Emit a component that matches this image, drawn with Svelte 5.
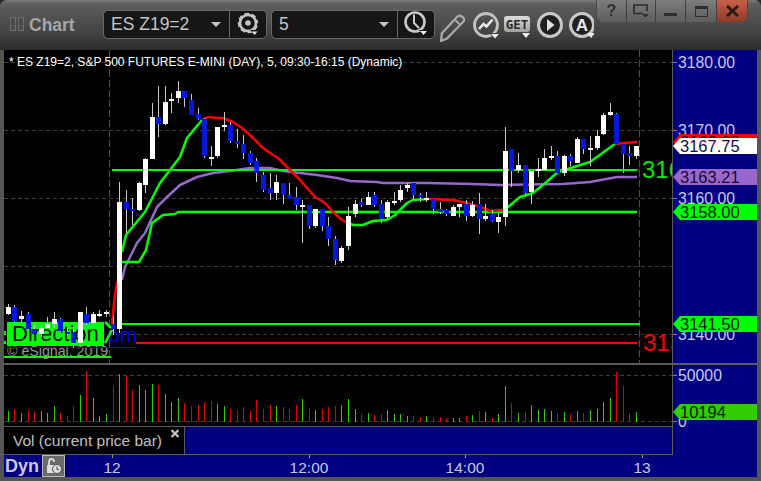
<script>
  const seg = (ox, oy, pts) => pts.map((r) => ({ t: oy + r[0] / 3, b: oy + r[1] / 3, bt: oy + r[2] / 3, bb: oy + r[3] / 3, c: r[4] }));
  const W = 'w', B = 'b';
  const raw = [
    ...seg(0, 80, [[672,705,682,702,W],[675,725,682,723,B],[693,730,708,718,W],[697,750,702,747,B],[735,762,748,761,B],[735,770,745,762,W],[712,745,732,744,W],[695,745,717,732,W],[713,755,718,752,B],[745,765,755,758,B],[748,805,755,790,B],[695,790,697,788,W],[682,735,702,728,B],[695,732,702,728,W],[690,712,703,707,W],[690,712,696,703,W],[708,765,732,746,B],[306,760,366,746,W],[330,460,366,387,B],[355,435,387,392,B],[305,392,310,390,W],[235,340,238,315,W],[68,237,111,237,W],[18,170,111,132,B],[18,135,66,132,W],[40,100,57,63,W],[3,68,33,54,W],[33,80,33,54,B],[42,105,60,105,B],[85,120,103,118,B],[115,235,118,228,B],[198,258,231,236,W],[140,235,142,228,W],[97,152,135,140,W],[125,190,136,183,B],[148,205,183,192,B],[165,237,192,219,B]]),
    ...seg(0, 80, [[213,255,220,250,B],[235,305,243,278,B],[275,335,285,329,B],[279,360,324,340,B],[285,360,306,338,W],[310,372,310,345,B],[308,358,345,357,B],[322,390,351,375,B],[360,488,375,381,W],[375,447,375,438,B],[387,445,387,438,W],[387,452,387,438,B],[410,497,438,477,B],[468,555,477,540,B],[498,548,504,543,W],[382,510,408,498,W],[360,410,372,402,W],[358,380,366,375,B],[336,375,351,375,W],[336,380,345,375,B],[360,430,372,417,B],[360,418,366,411,W],[336,375,363,369,W],[315,365,330,360,W],[308,335,315,323,W],[308,360,309,345,B],[338,365,345,351,B],[336,365,353,359,W],[358,402,358,387,B],[366,402,387,396,B],[387,408,390,402,B],[375,408,381,408,W],[372,410,372,381,W],[360,423,372,408,B],[362,410,375,408,W],[339,462,372,417,B],[372,422,408,417,W],[390,425,402,423,B],[400,458,411,426,W]]),
    ...seg(0, 90, [[110,408,183,381,W],[177,290,177,243,B],[190,250,225,240,W],[225,320,225,309,B],[243,342,243,306,W],[205,262,237,242,W],[178,240,204,240,W],[168,210,198,204,W],[183,250,198,249,B],[195,258,198,249,W],[192,228,198,213,B],[140,220,147,219,W],[147,192,147,178,B],[138,228,174,179,W],[120,180,138,174,W],[68,135,75,132,W],[40,78,66,75,W],[70,162,72,162,B],[162,248,162,192,B],[168,225,189,198,B],[168,208,168,198,W]])
  ];
  const candles = raw.map((c, i) => {
    const cx = Math.floor(8.4 + 6.54 * i);
    const t = Math.round(c.t), bt = Math.round(c.bt);
    return { cx, t, h: Math.max(1, Math.round(c.b) - t), bt, bh: Math.max(2, Math.round(c.bb) - bt), c: c.c };
  });

  const volA = [[1,32],[0,38],[1,26],[0,35],[0,29],[1,32],[1,26],[1,47],[0,26],[0,17],[0,47],[1,80],[0,152],[1,71],[1,17],[1,23],[0,107],[1,143],[0,137],[0,95],[1,110],[1,95],[1,113],[0,110],[1,83],[1,59],[1,71],[0,56],[0,47],[0,50],[0,60],[0,62],[1,53],[1,47],[0,38],[0,35],[0,44],[0,32],[0,65],[0,38],[0,50],[1,47],[0,44],[0,38],[0,50],[1,68],[0,41],[1,35],[0,38],[0,44],[0,47],[1,50],[1,68],[1,38],[0,23],[1,26],[0,20]];
  const volB = [[0,25],[1,35],[1,23],[1,23],[1,17],[0,17],[0,14],[1,17],[0,14],[0,14],[0,11],[1,11],[1,11],[0,17],[1,20],[0,32],[1,29],[0,11],[1,23],[1,107],[0,56],[1,26],[0,29],[1,50],[1,35],[1,38],[1,32],[0,26],[1,29],[0,23],[1,32],[0,26],[1,35],[1,38],[1,59],[1,71],[0,149],[0,107],[0,26],[1,29]];
  const vols = [...volA, ...volB].map((v, i) => ({ x: Math.floor(8.4 + 6.54 * i), h: Math.round(v[1] / 3), g: v[0] === 1 }));

  const poly = (a) => a.map((p) => p.join(',')).join(' ');
  const purple = poly([[122,280],[125,267],[137,243],[145,233],[157,207],[167,197],[180,185],[197,177],[213,173],[230,171],[250,168],[270,168],[283,171],[300,173],[317,175],[337,178],[350,181],[377,182],[383,183],[427,183],[473,184],[500,185],[563,184],[590,182],[617,177],[637,177]]);
  const channel = poly([[122,262],[139,262],[146,250],[152,223],[163,215],[175,214],[178,212],[637,212]]);
  const reds = [
    [[112,325],[114,303],[117,282]],
    [[202,120],[208,117],[217,118],[223,118],[233,122],[242,128],[250,135],[263,148],[270,153],[278,158],[290,170],[300,180],[315,197],[325,203],[333,212],[342,220],[348,223]],
    [[428,199],[453,200],[467,203],[483,208],[490,211],[507,210]],
    [[615,144],[637,142]]
  ].map(poly);
  const greens = [
    [[105,343],[112,330]],
    [[105,322],[111,328]],
    [[122,252],[126,235],[145,212],[160,183],[180,157],[187,138],[202,120]],
    [[348,223],[353,225],[363,225],[373,221],[387,220],[395,215],[407,203],[413,200],[428,199]],
    [[507,208],[520,197],[533,193],[543,185],[558,172],[590,162],[615,144]]
  ].map(poly);
  const grid = [62, 130, 198, 266, 334];
  const prices = [[62,'3180.00'],[130,'3170.00'],[198,'3160.00'],[266,''],[334,'3140.00']];
  const tags = [
    { y: 134, bg: '#ff0000', fg: '#200000', text: '3168.88' },
    { y: 138, bg: '#ffffff', fg: '#101040', text: '3167.75' },
    { y: 169, bg: '#9966cc', fg: '#1a0a30', text: '3163.21' },
    { y: 204, bg: '#00ff00', fg: '#002000', text: '3158.00' },
    { y: 316, bg: '#00ff00', fg: '#002000', text: '3141.50' }
  ];
  const ticks = [[112, '12'], [309, '12:00'], [465, '14:00'], [642, '13']];
</script>

<div class="window">
  <header class="title">
    <span class="mark"><i></i><i></i></span>
    <span class="name">Chart</span>

    <div class="group first">
      <span class="value">ES Z19=2</span>
      <span class="caret"></span>
      <span class="tool">
        <svg width="36" height="28" viewBox="231 11 36 28">
          <circle cx="249" cy="24" r="8.5" fill="none" stroke="#c4c4c4" stroke-width="3.6" />
          <circle cx="249" cy="24" r="10" fill="none" stroke="#151515" stroke-width="1.6" stroke-dasharray="3 5" />
          <circle cx="249" cy="24" r="2.8" fill="#c4c4c4" />
          <path d="M251 31h9l-4.500 5z" fill="#151515" /><path d="M252.500 32.500h6l-3 3.500z" fill="#e8e8e8" />
        </svg>
      </span>
    </div>

    <div class="group second">
      <span class="value">5</span>
      <span class="caret"></span>
      <span class="tool">
        <svg width="36" height="28" viewBox="399 11 36 28">
          <circle cx="416" cy="23" r="9.500" fill="none" stroke="#c8c8c8" stroke-width="2.600" />
          <path d="M415 15.500V24l5 5" fill="none" stroke="#c8c8c8" stroke-width="2" />
          <path d="M420 31h9l-4.500 5z" fill="#151515" /><path d="M421 32h7l-3.500 4z" fill="#e8e8e8" />
        </svg>
      </span>
    </div>

    <svg class="ico pencil" width="28" height="30" viewBox="440 13 28 30">
      <path d="M443 33l15-16c1.500-1.500 3.500-1.500 5.500 0s2 3.500 .5 5L448 38.500l-6 2.500z" fill="none" stroke="#a8a8a8" stroke-width="2.400" stroke-linejoin="round" />
      <path d="M456 20l5.500 5" stroke="#a8a8a8" stroke-width="2" />
    </svg>
    <svg class="ico chartic" width="31" height="30" viewBox="472 11 31 30">
      <circle cx="487" cy="25" r="11.500" fill="none" stroke="#c4c4c4" stroke-width="2.800" />
      <path d="M480 29l4.500-5 3 2.500 6-7" fill="none" stroke="#ececec" stroke-width="2.600" />
      <path d="M490 33h12l-6 6z" fill="#3c3c3c" /><path d="M492 34h8l-4 4.500z" fill="#eee" />
    </svg>
    <div class="get">
      <span>GET</span>
      <svg class="get-tri" width="10" height="6" viewBox="0 0 10 6"><path d="M1 0h8l-4 5z" fill="#eee" /></svg>
    </div>
    <svg class="ico play" width="28" height="28" viewBox="539 11 28 28">
      <circle cx="553" cy="25" r="11.500" fill="#202020" stroke="#c8c8c8" stroke-width="3" />
      <path d="M550 19l7.500 6-7.500 6z" fill="#e0e0e0" />
    </svg>
    <div class="aic">
      <svg width="26" height="30" viewBox="571 11 26 30">
        <circle cx="585" cy="25" r="11.500" fill="#202020" stroke="#c8c8c8" stroke-width="3" />
        <text x="585" y="31" text-anchor="middle" class="a">A</text>
        <path d="M590 33h8l-4 5z" fill="#eee" />
      </svg>
    </div>

    <div class="winbtns">
      <span class="wb b1">?</span>
      <span class="wb b2">
        <svg width="20" height="16" viewBox="0 0 20 16"><path d="M12 10.500H3V2h13v6" fill="none" stroke="#2e2e2e" stroke-width="1.600" /><path d="M11 11h7l-3.500 3.500z" fill="#2e2e2e" /></svg>
      </span>
      <span class="wb b3"><i></i></span>
      <span class="wb b4"><i></i></span>
      <span class="wb close">
        <svg width="15" height="12" viewBox="0 0 15 12"><path d="M2 1l11 10M13 1L2 11" stroke="#2c1a14" stroke-width="3" /></svg>
      </span>
    </div>
  </header>

  <div class="body">
    <svg class="price" width="668" height="313" viewBox="4 50 668 313">
      <g class="dash">
        {#each grid as y}<line x1="4" x2="672" y1={y + 0.5} y2={y + 0.5} />{/each}
      </g>
      <g class="vdash">
        <line x1="109.500" x2="109.500" y1="50" y2="363" />
        <line x1="639.500" x2="639.500" y1="50" y2="363" />
      </g>
      <text class="head" x="9" y="66">* ES Z19=2, S&amp;P 500 FUTURES E-MINI (DAY), 5, 09:30-16:15 (Dynamic)</text>

      <line class="level" x1="4" x2="111" y1="357" y2="357" />
      <text class="copy" x="7" y="356">© eSignal, 2019</text>
      <rect x="7" y="322" width="97" height="24" fill="#00ff00" />
      <text class="dir" x="12" y="341">Direction</text>
      <text class="com" x="108" y="342">om</text>
      <rect x="4" y="347" width="132" height="1" fill="#1010c0" />
      <rect x="4" y="331" width="2" height="4" fill="#00ff00" />
      <rect x="4" y="341" width="2" height="3" fill="#00ff00" />

      <polyline class="ln" points={purple} stroke="#9966cc" />
      <line class="level" x1="112" x2="637" y1="170" y2="170" />
      <polyline class="ln" points={channel} stroke="#00ff00" />
      <line class="level" x1="121" x2="640" y1="324" y2="324" />
      <line x1="136" x2="637" y1="343" y2="343" stroke="#ff0000" stroke-width="2" />
      {#each greens as g}<polyline class="ln" points={g} stroke="#00ff00" />{/each}
      {#each reds as r}<polyline class="ln" points={r} stroke="#ff0000" />{/each}

      <g shape-rendering="crispEdges">
        {#each candles as c}
          <rect x={c.cx} y={c.t} width="1" height={c.h} fill="#c8c8c8" />
          <rect x={c.cx - 2} y={c.bt} width="5" height={c.bh} fill={c.c === 'w' ? '#ffffff' : '#0018e0'} />
        {/each}
      </g>

      <text class="big" x="642" y="178" fill="#00ee00">316</text>
      <text class="big" x="643" y="351" fill="#ff0000">313</text>
    </svg>

    <div class="vline r1"></div>

    <svg class="axis r-all" width="84" height="427" viewBox="673 50 84 427">
      <rect x="673" y="50" width="84" height="427" fill="#000080" />
      <rect x="673" y="363" width="84" height="2" fill="#5a5a5a" />
      {#each prices as p}
        {#if p[1]}
          <line x1="673" x2="677" y1={p[0] + 0.5} y2={p[0] + 0.5} stroke="#888" />
          <text class="ax" x="678" y={p[0] + 6}>{p[1]}</text>
        {/if}
      {/each}
      <line x1="673" x2="677" y1="375.500" y2="375.500" stroke="#888" />
      <text class="ax" x="678" y="381">50000</text>
      <line x1="673" x2="677" y1="421.500" y2="421.500" stroke="#888" />
      <text class="ax" x="678" y="427">0</text>
      {#each tags as t}
        <path d={`M673 ${t.y + 8}l7-8h77v16h-77z`} fill={t.bg} />
        <text class="tag" x="680" y={t.y + 14} fill={t.fg}>{t.text}</text>
      {/each}
      <path d="M673 412l7-8h77v16h-77z" fill="#33cc00" />
      <text class="tag" x="680" y="418" fill="#0a2000">10194</text>
    </svg>

    <div class="sep"></div>

    <svg class="vol" width="668" height="61" viewBox="4 365 668 61">
      <g class="dash">
        <line x1="4" x2="672" y1="375.500" y2="375.500" />
        <line x1="4" x2="672" y1="421.500" y2="421.500" />
      </g>
      <g shape-rendering="crispEdges">
        {#each vols as v}
          <rect x={v.x} y={422 - v.h} width="1" height={v.h} fill={v.g ? '#33cc00' : '#e00000'} />
        {/each}
      </g>
    </svg>
    <div class="vline r3"></div>

    <div class="legend">
      <div class="leg-label">
        <span>Vol (current price bar)</span>
        <svg class="x" width="10" height="9" viewBox="0 0 10 9"><path d="M1.500 1l7 7M8.500 1l-7 7" stroke="#c4c4c4" stroke-width="2.200" /></svg>
      </div>
      <div class="leg-fill"></div>
    </div>
    <div class="vline r4"></div>
  </div>

  <footer class="xaxis">
    <span class="dyn">Dyn</span>
    <span class="lock">
      <svg width="20" height="20" viewBox="0 0 20 20">
        <path d="M5 9V6c0-2 1-3 2.500-3S10 4 10 6" fill="none" stroke="#ddd" stroke-width="1.800" />
        <rect x="3" y="9" width="8" height="8" fill="#ddd" />
        <circle cx="13" cy="13" r="4.500" fill="#ddd" stroke="#555" />
        <path d="M13 10.500V13.500h2" fill="none" stroke="#444" stroke-width="1" />
      </svg>
    </span>
    <svg class="xsvg" width="692" height="22" viewBox="65 455 692 22">
      {#each ticks as t}
        <line x1={t[0] + 0.5} x2={t[0] + 0.5} y1="455" y2="458" stroke="#999" />
        <text class="xl" x={t[0]} y="473" text-anchor="middle">{t[1]}</text>
      {/each}
    </svg>
  </footer>
</div>

<style>
  :global(body) { margin: 0; background: #2a2a2a; }
  .window {
    width: 761px; height: 481px; box-sizing: border-box;
    padding: 0 4px 4px; background: #555;
    border-radius: 7px 7px 0 0; overflow: hidden;
    font-family: "Liberation Sans", Arial, sans-serif;
    display: flex; flex-direction: column;
  }
  .title {
    height: 50px; margin: 0 -4px; padding: 0 0 0 10px; flex: none;
    display: flex; align-items: flex-start;
    background: linear-gradient(#7a7a7a 0, #5e5e5e 4px, #545454 14px, #464646 30px, #2c2c2c 50px);
    position: relative;
  }
  .mark { display: flex; gap: 2px; margin-top: 17px; }
  .mark i { height: 14px; border: 1px solid #6e6e6e; box-sizing: border-box; width: 6px; background: #4a4a4a; }
  .name { font-weight: bold; font-size: 17.5px; color: #a6a6a6; margin: 15px 0 0 5px; width: 74px; }
  .group {
    height: 29px; margin-top: 10px; box-sizing: border-box;
    background: #151515; border: 1px solid #686868; border-radius: 5px;
    display: flex; align-items: center; position: relative; flex: none;
  }
  .group.first { width: 164px; }
  .group.second { width: 164px; margin-left: 4px; background: #151515; }
  .value { font-size: 17.5px; color: #c4c4c4; padding-left: 7px; flex: 1; }
  .caret { width: 0; height: 0; border-left: 5px solid transparent; border-right: 5px solid transparent; border-top: 5px solid #c8c8c8; margin-right: 8px; }
  .tool { width: 36px; height: 27px; border-left: 1px solid #686868; display: block; flex: none; overflow: hidden; }
  .tool svg { display: block; margin-top: -1px; }
  .ico { flex: none; }
  .pencil { margin: 13px 0 0 4px; }
  .chartic { margin: 11px 0 0 4px; }
  .get {
    width: 26px; height: 16px; margin: 16px 2px 0 2px; flex: none;
    background: linear-gradient(#dcdcdc, #a0a0a0); border-radius: 3px;
    position: relative; text-align: center; line-height: 16px;
  }
  .get span { font-family: "DejaVu Sans Mono", monospace; font-weight: bold; font-size: 12.5px; color: #2a2a2a; letter-spacing: 0; }
  .get-tri { position: absolute; right: -1px; top: 17px; }
  .play { margin: 11px 0 0 4px; }
  .aic { width: 26px; height: 30px; margin: 11px 0 0 4px; flex: none; }
  .a { font-family: "Liberation Sans", sans-serif; font-weight: bold; font-size: 17px; fill: #e8e8e8; }
  .winbtns {
    position: absolute; left: 597px; top: 0; width: 150px; height: 22px;
    display: flex; border-radius: 0 0 6px 6px; overflow: hidden;
    box-shadow: 0 0 0 1px #4c4c4c;
  }
  .wb {
    background: linear-gradient(#7c7c7c, #5e5e5e); border-right: 1px solid #404040;
    display: flex; align-items: center; justify-content: center; box-sizing: border-box;
    color: #2e2e2e; font-weight: bold; font-size: 16px;
  }
  .b1 { width: 30px; } .b2 { width: 29px; } .b3 { width: 30px; } .b4 { width: 31px; }
  .b3 i { width: 13px; height: 3px; background: #2e2e2e; margin-top: 6px; }
  .b4 i { width: 13px; height: 11px; border: 1.5px solid #2e2e2e; border-top-width: 3px; box-sizing: border-box; }
  .close { width: 30px; border: 0; background: linear-gradient(#c86048, #8e3a28); }

  .body {
    display: grid; grid-template-columns: 668px 1px 84px; grid-template-rows: 313px 2px 61px 1px 27px 1px;
    background: #000; flex: none; width: 753px;
  }
  .body svg { display: block; }
  .price { grid-column: 1; grid-row: 1; background: #000; }
  .vline { background: #5a5a5a; grid-column: 2; }
  .r1 { grid-row: 1; } .r3 { grid-row: 3; } .r4 { grid-row: 4 / 7; }
  .r-all { grid-column: 3; grid-row: 1 / 7; }
  .sep { grid-column: 1 / 3; grid-row: 2; background: #5a5a5a; }
  .vol { grid-column: 1; grid-row: 3; background: #000; }
  .legend {
    grid-column: 1; grid-row: 4 / 7; display: flex;
    border-top: 1px solid #5a5a5a; border-bottom: 1px solid #5a5a5a;
  }
  .leg-label { width: 180px; height: 27px; background: #000; color: #c0c0c0; font-size: 15.5px; position: relative; padding: 5px 0 0 9px; box-sizing: border-box; flex: none; line-height: 18px; }
  .x { position: absolute; left: 166px; top: 2px; }
  .leg-fill { flex: 1; background: #000080; border-left: 1px solid #5a5a5a; }

  .xaxis { height: 22px; background: #000080; display: flex; flex: none; width: 753px; }
  .dyn { font-weight: bold; font-size: 18px; color: #c8c8e0; width: 38.500px; padding-left: 1px; box-sizing: border-box; line-height: 22px; }
  .lock { width: 23px; height: 22px; box-sizing: border-box; background: #6a6a6a; border: 1px solid #b8b8b8; flex: none; display: flex; align-items: center; justify-content: center; }
  .xsvg { display: block; flex: none; }
  .xl { font-size: 15.500px; fill: #c8c8e0; }

  .dash line { stroke: #3c3c3c; stroke-dasharray: 4 3; }
  .vdash line { stroke: #505050; stroke-dasharray: 7 3; }
  .head { font-size: 12px; fill: #fff; }
  .copy { font-size: 14.200px; fill: #999; }
  .dir { font-size: 22px; fill: #001000; }
  .com { font-size: 21px; fill: #0000e0; }
  .level { stroke: #00ff00; stroke-width: 2; }
  .ln { fill: none; stroke-width: 2.500; stroke-linejoin: round; }
  .big { font-size: 24px; }
  .ax { font-size: 15.800px; fill: #c8c8e8; }
  .tag { font-size: 16.500px; }
</style>
